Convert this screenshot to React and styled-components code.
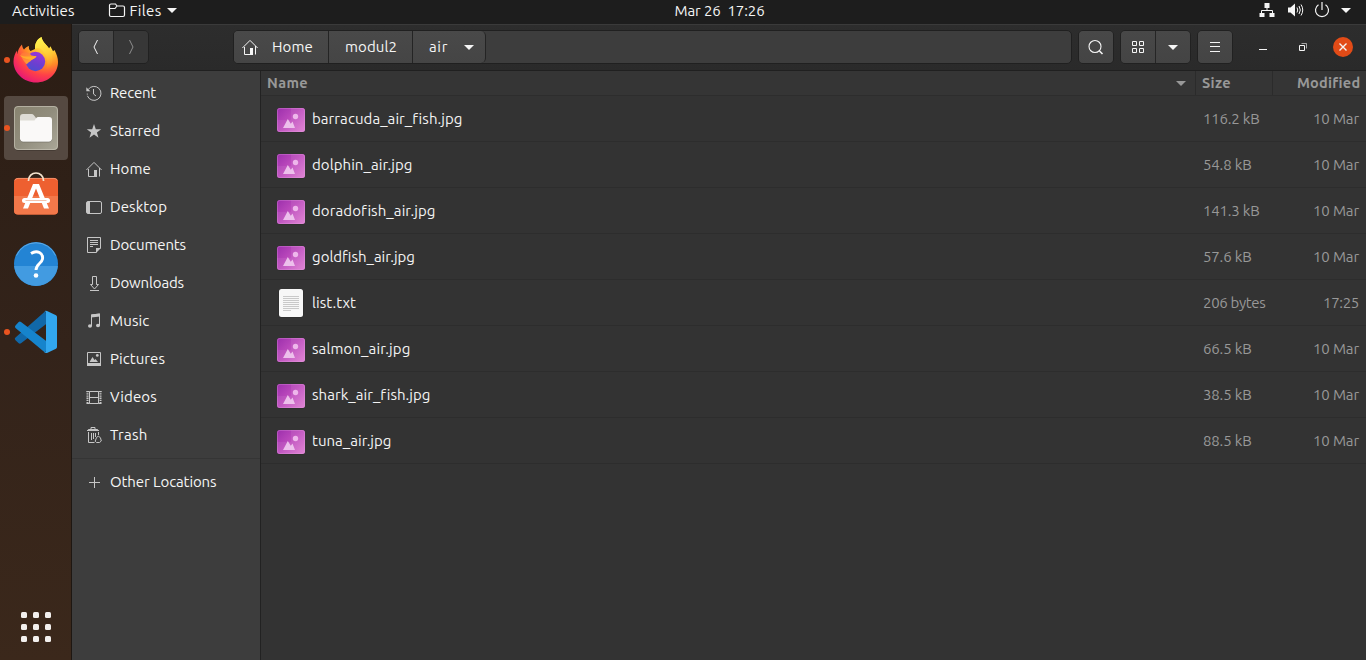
import React, { useLayoutEffect, useRef, useState } from "react";
import styled, { createGlobalStyle } from "styled-components";

const GlobalStyle = createGlobalStyle`
  * { box-sizing: border-box; }
  html, body { margin: 0; padding: 0; background: #333; }
  body {
    font-family: Ubuntu, "Noto Sans", "Open Sans", sans-serif;
    font-size: 15px;
    color: #f5f5f5;
    overflow: hidden;
  }
  svg { display: block; flex: none; overflow: visible; }
`;

/* Text tracked so that its line takes a given width */
const FitBox = styled.span`
  display: block;
  flex: none;
  width: ${(p) => p.$w}px;
  white-space: pre;
  line-height: 20px;
  text-align: left;
`;
function Fit({ w, children }) {
  const inner = useRef(null);
  const [track, setTrack] = useState(0);
  useLayoutEffect(() => {
    const natural = inner.current.getBoundingClientRect().width;
    setTrack((w - natural) / String(children).length);
  }, [w, children]);
  return (
    <FitBox $w={w}>
      <span ref={inner} style={{ letterSpacing: `${track}px` }}>{children}</span>
    </FitBox>
  );
}

const Screen = styled.div`
  width: 1366px;
  height: 660px;
  display: flex;
  flex-direction: column;
`;
const TopBar = styled.header`
  height: 24px;
  flex: none;
  display: grid;
  grid-template-columns: 674.5px 1fr auto;
  align-items: center;
  background: #1d1d1d;
  padding: 0 15px 3px 0;
`;
const TopLeft = styled.div`
  display: flex;
  align-items: center;
  padding-left: 12px;
`;
const AppMenu = styled.div`
  display: flex;
  align-items: center;
  margin-left: 33px;
  gap: 5px;
`;
const Tray = styled.div`
  display: flex;
  align-items: center;
  gap: 12px;
  padding-bottom: 1px;
`;
const Body = styled.div`
  flex: 1;
  display: flex;
  min-height: 0;
`;
const Dock = styled.nav`
  width: 72px;
  flex: none;
  display: flex;
  flex-direction: column;
  gap: 4px;
  padding: 4px 3px 16px 4px;
  border-right: 1px solid #1e1712;
  background: linear-gradient(#2b1d14, #33231a 50%, #3b281b);
`;
const DockItem = styled.div`
  position: relative;
  width: 64px;
  height: 64px;
  flex: none;
  display: grid;
  place-items: center;
  border-radius: 4px;
  background: ${(p) => (p.$active ? "#554941" : "transparent")};
`;
const RunningDot = styled.i`
  position: absolute;
  left: 0;
  top: 29px;
  width: 6px;
  height: 6px;
  border-radius: 50%;
  background: #e95420;
`;
const AppGrid = styled.div`
  margin: auto auto 2px 17px;
  display: grid;
  grid-template-columns: repeat(3, 6px);
  gap: 6px;
`;
const GridDot = styled.i`
  height: 6px;
  border-radius: 1.5px;
  background: #f3f0ee;
`;
const Window = styled.main`
  flex: 1;
  display: flex;
  flex-direction: column;
  min-width: 0;
`;
const HeaderBar = styled.div`
  height: 47px;
  flex: none;
  display: flex;
  align-items: center;
  padding: 0 13px 1px 6px;
  border-top: 1px solid #3a3a3a;
  border-bottom: 1px solid #202020;
  background: linear-gradient(#2d2d2d, #2a2a2a);
`;
const ButtonGroup = styled.div`
  display: flex;
  height: 34px;
  flex: none;
  margin-left: ${(p) => p.$gap || 0}px;
  border: 1px solid #212121;
  border-radius: 5px;
  overflow: hidden;
`;
const HeaderButton = styled.div`
  width: 34px;
  display: grid;
  place-items: center;
  color: ${(p) => (p.$dim ? "#8e8e8e" : "#f5f5f5")};
  background: ${(p) => (p.$dim ? "#373737" : "linear-gradient(#484848, #444)")};
  & + & {
    width: 35px;
    border-left: 1px solid #252525;
  }
`;
const PathBar = styled.div`
  flex: 1;
  height: 34px;
  margin-left: 84px;
  display: flex;
  border: 1px solid #202020;
  border-radius: 5px;
  overflow: hidden;
  background: #3d3d3d;
`;
const Crumb = styled.div`
  display: flex;
  align-items: center;
  width: ${(p) => p.$w}px;
  gap: ${(p) => p.$gap || 0}px;
  padding-left: ${(p) => p.$pad}px;
  border-right: 1px solid #242424;
  background: linear-gradient(#494949, #454545);
  &:last-child { border-radius: 0 5px 5px 0; }
`;
const WindowControls = styled.div`
  display: flex;
  align-items: center;
  margin-left: 25px;
`;
const Control = styled.div`
  width: ${(p) => p.$w}px;
`;
const Columns = styled.div`
  flex: 1;
  display: flex;
  min-height: 0;
`;
const Sidebar = styled.aside`
  width: 189px;
  flex: none;
  padding-top: 3px;
  background: #3d3d3d;
  border-right: 1px solid #222;
`;
const Place = styled.div`
  height: 38px;
  display: flex;
  align-items: center;
  gap: 8px;
  padding-left: 14px;
  color: #c6c6c6;
  span { color: #f5f5f5; }
`;
const Divider = styled.div`
  height: 1px;
  margin: 4px 0;
  background: #353535;
`;
const FileList = styled.section`
  flex: 1;
  background: #333;
`;
const Row = styled.div`
  display: grid;
  grid-template-columns: 935px 77px 1fr;
  height: 46px;
  border-bottom: 1px solid #2d2d2d;
  color: #989898;
`;
const HeadRow = styled(Row)`
  height: 25px;
  font-size: 14.5px;
  font-weight: 700;
  background: #353535;
`;
const HeadCell = styled.div`
  display: flex;
  align-items: center;
  justify-content: ${(p) => p.$justify || "flex-start"};
  padding: ${(p) => p.$pad};
  border-right: ${(p) => (p.$last ? "none" : "1px solid #2b2b2b")};
`;
const Cell = styled.div`
  display: flex;
  align-items: center;
  justify-content: ${(p) => (p.$end ? "flex-end" : "flex-start")};
  padding: 0 7px 0 7px;
`;
const NameCell = styled(Cell)`
  gap: 6px;
  padding-left: 15px;
  color: #f3f3f3;
`;

const Line = ({ size = 16, children, ...rest }) => (
  <svg width={size} height={size} viewBox={`0 0 ${size} ${size}`} fill="none" stroke="currentColor" {...rest}>
    {children}
  </svg>
);
const Caret = ({ w = 10 }) => (
  <svg width={w} height="5" viewBox="0 0 10 5"><path d="M0 0h10L5 5z" fill="currentColor" /></svg>
);

const HomeIcon = () => (
  <Line>
    <path d="M.4 9 8 1.4 15.6 9M2.5 8v7.5H8M13.5 7v8.5" />
    <path d="M8 9h3v7H8z" fill="currentColor" stroke="none" />
  </Line>
);
const places = [
  ["Recent", 46, <Line><path d="M2.1 4.6A7 7 0 1 1 1.5 11" /><path d="M1.3 8.6v2.2" strokeDasharray="1 1" /><path d="M.3 2.2v4h4z" fill="currentColor" stroke="none" /><path d="M7.5 4v5l2.5 2" /></Line>],
  ["Starred", 50.5, <Line><path d="m8 1 1.8 5.200h5.400l-4.300 3.300 1.600 5.300L8 11.600l-4.500 3.200 1.600-5.300L.8 6.200h5.400z" fill="currentColor" stroke="none" /></Line>],
  ["Home", 41, <HomeIcon />],
  ["Desktop", 57, <Line><rect x=".5" y="2.5" width="15" height="12" rx="1.5" /><path d="M1 3h3v11H1z" fill="currentColor" stroke="none" /></Line>],
  ["Documents", 76, <Line><path d="M10.5 15.5h-9V.5h13v11" /><path d="M10 16v-5h5z" fill="currentColor" stroke="none" /><path d="M4 3.5h8M4 5.5h8M4 7.5h8M4 9.5h3" /></Line>],
  ["Downloads", 74, <Line><path d="M6.5 1.5h4v8h2L8.5 14l-4-4.5h2zM4 15.5h9" /></Line>],
  ["Music", 39.5, <Line><path d="M5.5 13V2L13.5 1v11.5" /><path d="M5 1.6 14 .5v3L5 4.6z" fill="currentColor" stroke="none" /><ellipse cx="4" cy="13" rx="2" ry="1.7" fill="currentColor" stroke="none" /><ellipse cx="12" cy="12.5" rx="2" ry="1.7" fill="currentColor" stroke="none" /></Line>],
  ["Pictures", 55, <Line><path d="M1.5 1.5h13v13h-13z" /><path d="M1 12h14v3H1zM3.5 11l3-5 2 3 1-1 2.5 3z" fill="currentColor" stroke="none" /><circle cx="11.3" cy="4.4" r="1.4" fill="currentColor" stroke="none" /></Line>],
  ["Videos", 47, <Line><path d="M3.5 2.5h9v12h-9zM3.5 8.5h9M.5 2.5h3M12.5 2.5h3M.5 14.5h3M12.5 14.5h3" /><path d="M1.5 2v13M14.5 2v13" strokeWidth="2" strokeDasharray="1.3 .9" /></Line>],
  ["Trash", 37.5, <Line><path d="M1 3.5h12M5 2.5v-2h4v2M2.5 5v10.5h6M12.5 5v3M5.5 6v7M7.5 6v6M9.5 6v4" /><path d="M2.5 2h9l1.5 2H1z" fill="currentColor" stroke="none" /><path d="M10.5 10.5l2-1.5 2 2 .8 3-1.8 1.5h-3l-1.3-1.3z" /></Line>],
];
const PlusIcon = () => <Line><path d="M8.5 3v11M3 8.5h11" /></Line>;

const ImageIcon = () => (
  <svg width="30" height="30" viewBox="0 0 30 30">
    <defs>
      <linearGradient id="pic" x1="0" y1="0" x2="1" y2=".8">
        <stop offset="0" stopColor="#9c2fac" /><stop offset=".5" stopColor="#bd4bbd" /><stop offset="1" stopColor="#da76cf" />
      </linearGradient>
    </defs>
    <rect x="1" y="4" width="28" height="24.5" rx="2.5" fill="#262626" opacity=".6" />
    <rect x="1" y="4" width="28" height="24" rx="2.5" fill="url(#pic)" />
    <path d="M15 4h11.5a2.5 2.5 0 0 1 2.5 2.5V16H15z" fill="#fff" opacity=".07" />
    <path d="M1 16h28v9.5a2.5 2.5 0 0 1-2.5 2.5h-23A2.5 2.5 0 0 1 1 25.5z" fill="#fff" opacity=".07" />
    <rect x="1.5" y="4.5" width="27" height="23" rx="2" fill="none" stroke="#e9a1e4" opacity=".3" />
    <path d="M7 24 11.8 15l3 4.8L16.5 17.5 19 24z" fill="#f0c8ef" opacity=".92" />
    <circle cx="19.5" cy="12.5" r="2.7" fill="#eeb6eb" />
  </svg>
);
const TextIcon = () => (
  <svg width="30" height="30" viewBox="0 0 30 30">
    <rect x="2.5" y="1" width="25" height="28.5" rx="2.5" fill="#202020" opacity=".5" />
    <rect x="3" y="1" width="24" height="28" rx="2.5" fill="#f7f7f7" />
    <path d="M7 8.5h16M7 10.5h16M7 12.5h16M7 14.5h16M7 16.5h16M7 18.5h16M7 20.5h16M7 22.5h8" stroke="#bcbcbc" strokeWidth=".8" />
  </svg>
);

const Firefox = () => (
  <svg width="46" height="49" viewBox="0 0 46 49">
    <defs>
      <radialGradient id="fxBody" cx=".75" cy=".12" r="1">
        <stop offset="0" stopColor="#fff44f" /><stop offset=".28" stopColor="#ffc332" /><stop offset=".5" stopColor="#ff8a27" />
        <stop offset=".72" stopColor="#ff4048" /><stop offset="1" stopColor="#e2117e" />
      </radialGradient>
      <linearGradient id="fxGlobe" x1=".7" y1="0" x2=".3" y2="1">
        <stop offset="0" stopColor="#9b36d9" /><stop offset=".6" stopColor="#6c3fd0" /><stop offset="1" stopColor="#4b4ed0" />
      </linearGradient>
      <linearGradient id="fxFlame" x1=".4" y1="0" x2=".6" y2="1">
        <stop offset="0" stopColor="#fff650" /><stop offset=".5" stopColor="#ffd039" /><stop offset="1" stopColor="#ff9a29" stopOpacity="0" />
      </linearGradient>
      <linearGradient id="fxEar" x1="0" y1="0" x2="1" y2="1">
        <stop offset="0" stopColor="#ff7139" /><stop offset="1" stopColor="#ffb22e" />
      </linearGradient>
    </defs>
    <path d="M9 8.5c.2 2 .8 3.6 2 5 1.5-1.9 3.2-3 5-3.500-.5 2 .3 4 1.500 5L22 13c-.4-5 2-10 6.500-12 1 5.500 5 7.500 7.500 11.500l1.500-2.200c1 2 1.800 3.400 2.500 5l1.500-1.300c2.400 4.500 3.500 8 3.500 12C45 38 35 46.500 23 46.500S.5 37 .5 25.500c0-4.500 1.500-8 3.500-11v4C5 14 6.500 11 9 8.500z" fill="url(#fxBody)" />
    <circle cx="22.5" cy="25.5" r="9.7" fill="url(#fxGlobe)" />
    <path d="M28.5 1c1 5.500 5 7.500 7.500 11.500 6 9 4 19-3 22 3-7 1-17-4.500-21C25 11 22 13.500 22 13c-.4-5 2-10 6.500-12z" fill="url(#fxFlame)" />
    <path d="M8 18c4-3 8-2 10.500 1.500 2 .7 4 .4 5 .7-1 2-3.500 2.800-5 3.800-.5 1.500-3 2-4.700 4.200C11 25.500 8 22 8 18z" fill="url(#fxEar)" />
    <path d="M6.500 19c5 2.500 10 1 17 1.200-1 2-3.500 2.800-5 3.800-4-.8-8.500-1.500-12-5z" fill="#ffae2b" />
  </svg>
);
const FilesApp = () => (
  <svg width="46" height="46" viewBox="0 0 46 46">
    <defs><linearGradient id="fm" x2="1" y2="1"><stop stopColor="#88836f" /><stop offset=".5" stopColor="#918d7d" /><stop offset="1" stopColor="#aaa798" /></linearGradient></defs>
    <rect x="1" y="1" width="44" height="44.5" rx="4" fill="#38302a" />
    <rect x="1" y="1" width="44" height="44" rx="4" fill="url(#fm)" />
    <rect x="1.5" y="1.5" width="43" height="43" rx="3.5" fill="none" stroke="#c4c1b4" opacity=".7" />
    <path d="M7 12a3 3 0 0 1 3-3h8.500a3 3 0 0 1 2.400 1.300L23 13v6H7z" fill="#dedcd5" />
    <path d="M7 15.500h14.500l2-2.700A2 2 0 0 1 25 12h11a3 3 0 0 1 3 3v19a3 3 0 0 1-3 3H10a3 3 0 0 1-3-3z" fill="#faf9f8" />
    <path d="M7 34.500a3 3 0 0 0 3 2.500h26a3 3 0 0 0 3-2.500" fill="none" stroke="#6d6a5e" strokeWidth=".6" />
  </svg>
);
const Software = () => (
  <svg width="46" height="46" viewBox="0 0 46 46">
    <rect x="1" y="5" width="44" height="36.5" rx="4" fill="#ee6030" />
    <path d="M1 23h44v14.500a4 4 0 0 1-4 4H5a4 4 0 0 1-4-4z" fill="#f2784a" />
    <path d="M1.800 7.500A3.500 3.500 0 0 1 5 5.400h36a3.500 3.500 0 0 1 3.200 2.100" fill="none" stroke="#f59a78" strokeWidth=".8" />
    <path d="M15.500 8V7.500a7.500 7.500 0 0 1 15 0V8" fill="none" stroke="#f5e4cf" strokeWidth="1.7" />
    <path d="M20 11h6l10 24.500h-5L23 15.500 15 35.500h-5z" fill="#fff" />
    <rect x="9" y="25" width="28" height="5" rx="2.5" fill="#fff" />
    <path d="M12.500 27.500h21" stroke="#f0b298" strokeWidth=".8" />
  </svg>
);
const Help = () => (
  <svg width="44" height="44" viewBox="0 0 44 44">
    <circle cx="22" cy="22" r="22" fill="#2384d4" />
    <path d="M.1 24a22 22 0 0 0 43.8 0z" fill="#429be1" />
    <path d="M2.5 13.500a21.300 21.300 0 0 1 39 0" fill="none" stroke="#6db4ea" strokeWidth=".8" />
    <path d="M17 11.500C23 7.500 29.500 11 28.500 17c-.8 4.500-6.500 5-6.500 11" fill="none" stroke="#fff" strokeWidth="2.9" />
    <circle cx="22" cy="33.5" r="2.3" fill="#fff" />
  </svg>
);
const Code = () => (
  <svg width="44" height="44" viewBox="0 0 44 44">
    <path d="M1.500 27.500 31.500 1l2 12L7 33.300a1.800 1.800 0 0 1-2.300 0L1.500 30.200a1.800 1.800 0 0 1 0-2.700z" fill="#1168a9" />
    <path d="M1.500 15.500 4.700 12a1.800 1.800 0 0 1 2.300 0l26.500 20-2 11-30-25a1.800 1.800 0 0 1 0-2.500z" fill="#1684cc" />
    <path d="M31.500 43a2.500 2.500 0 0 1-1.500-.5c1.300.5 2-.3 2-1.500V3c0-1.300-.7-2-2-1.500a2.500 2.500 0 0 1 3-.5l9 4.300A2 2 0 0 1 43 7v30a2 2 0 0 1-1 1.700L33 43z" fill="#32a7ef" />
  </svg>
);

const dockApps = [
  { name: "firefox", icon: <Firefox />, running: true },
  { name: "files", icon: <FilesApp />, running: true, active: true },
  { name: "software", icon: <Software /> },
  { name: "help", icon: <Help /> },
  { name: "code", icon: <Code />, running: true },
];
const files = [
  ["barracuda_air_fish.jpg", 150, "116.2 kB", 56.5],
  ["dolphin_air.jpg", 100.5, "54.8 kB", 48.5],
  ["doradofish_air.jpg", 123, "141.3 kB", 56.5],
  ["goldfish_air.jpg", 103, "57.6 kB", 48.5],
  ["list.txt", 44, "206 bytes", 62.5, "17:25", 36],
  ["salmon_air.jpg", 98.5, "66.5 kB", 48.5],
  ["shark_air_fish.jpg", 118, "38.5 kB", 48.5],
  ["tuna_air.jpg", 79.5, "88.5 kB", 48.5],
];

export default function App() {
  return (
    <Screen>
      <GlobalStyle />
      <TopBar>
        <TopLeft>
          <Fit w={62.5}>Activities</Fit>
          <AppMenu>
            <Line size={17}><path d="M1.5 13V3.500A1.500 1.500 0 0 1 3 2h4.500L9 4h6a1.500 1.500 0 0 1 1.500 1.500V13a1.500 1.500 0 0 1-1.500 1.500H3A1.500 1.500 0 0 1 1.500 13zM1.500 6.500H7L9 4" strokeWidth="1.2" /></Line>
            <Fit w={32}>Files</Fit>
            <Caret />
          </AppMenu>
        </TopLeft>
        <Fit w={90}>{"Mar 26  17:26"}</Fit>
        <Tray>
          <Line><path d="M8 6v3M2.500 12V8.500h11V12" /><path d="M5.500 1h5v5h-5zM.5 11h5v4h-5zM10.500 11h5v4h-5z" fill="currentColor" stroke="none" /></Line>
          <Line><path d="M1 5.500h2.500L8 1.500v13l-4.500-4H1z" fill="currentColor" stroke="none" /><path d="M10 5.500q1.500 2.500 0 5M12 4q2.700 4 0 8M14 2.500q3.500 5.500 0 11" /></Line>
          <Line size={14} viewBox="1 1 14 14"><path d="M4.500 2.700a6.500 6.500 0 1 0 7 0M8 0v8" strokeWidth="1.2" /></Line>
          <Caret />
        </Tray>
      </TopBar>
      <Body>
        <Dock>
          {dockApps.map((a) => (
            <DockItem key={a.name} $active={a.active}>
              {a.running && <RunningDot />}
              {a.icon}
            </DockItem>
          ))}
          <AppGrid>{Array.from({ length: 9 }, (_, i) => <GridDot key={i} />)}</AppGrid>
        </Dock>
        <Window>
          <HeaderBar>
            <ButtonGroup>
              <HeaderButton><Line><path d="M9.500 1 6 8l3.500 7" /></Line></HeaderButton>
              <HeaderButton $dim><Line><path d="M6.500 1 10 8l-3.500 7" /></Line></HeaderButton>
            </ButtonGroup>
            <PathBar>
              <Crumb $w={95} $pad={8} $gap={14}><HomeIcon /><Fit w={41}>Home</Fit></Crumb>
              <Crumb $w={84} $pad={16}><Fit w={52}>modul2</Fit></Crumb>
              <Crumb $w={73} $pad={16} $gap={16}><Fit w={19}>air</Fit><Caret /></Crumb>
            </PathBar>
            <ButtonGroup $gap={6}>
              <HeaderButton><Line><circle cx="7" cy="7.5" r="6" strokeWidth="1.1" /><path d="m11.500 12 3 3" strokeWidth="1.6" /></Line></HeaderButton>
            </ButtonGroup>
            <ButtonGroup $gap={6}>
              <HeaderButton><Line><path d="M2.500 2.500h4v4h-4zM9.500 2.500h4v4h-4zM2.500 9.500h4v4h-4zM9.500 9.500h4v4h-4z" /></Line></HeaderButton>
              <HeaderButton><Caret /></HeaderButton>
            </ButtonGroup>
            <ButtonGroup $gap={6}>
              <HeaderButton><Line><path d="M3 3.500h10M3 7.500h10M3 12.500h10" /></Line></HeaderButton>
            </ButtonGroup>
            <WindowControls>
              <Control $w={40}><Line size={10}><path d="M1 7.500h8" /></Line></Control>
              <Control $w={35}><Line size={10}><path d="M1.500 3.500h5v5h-5z" /><path d="M3.500 1.500h5v5" opacity=".6" /></Line></Control>
              <Line size={20}><circle cx="10" cy="10" r="10" fill="#e24b17" stroke="none" /><path d="m6.500 6.500 7 7m0-7-7 7" strokeWidth="1.4" /></Line>
            </WindowControls>
          </HeaderBar>
          <Columns>
            <Sidebar>
              {places.map(([name, w, icon]) => (
                <Place key={name}>{icon}<Fit w={w}>{name}</Fit></Place>
              ))}
              <Divider />
              <Place><PlusIcon /><Fit w={106.5}>Other Locations</Fit></Place>
            </Sidebar>
            <FileList>
              <HeadRow>
                <HeadCell $pad="0 9px 0 6px" $justify="space-between"><Fit w={41}>Name</Fit><Caret /></HeadCell>
                <HeadCell $pad="0 0 0 6px"><Fit w={29}>Size</Fit></HeadCell>
                <HeadCell $pad="0 6px 0 0" $justify="flex-end" $last><Fit w={63}>Modified</Fit></HeadCell>
              </HeadRow>
              {files.map(([name, nameW, size, sizeW, date = "10 Mar", dateW = 46]) => (
                <Row key={name}>
                  <NameCell>
                    {name.endsWith(".txt") ? <TextIcon /> : <ImageIcon />}
                    <Fit w={nameW}>{name}</Fit>
                  </NameCell>
                  <Cell><Fit w={sizeW}>{size}</Fit></Cell>
                  <Cell $end><Fit w={dateW}>{date}</Fit></Cell>
                </Row>
              ))}
            </FileList>
          </Columns>
        </Window>
      </Body>
    </Screen>
  );
}
